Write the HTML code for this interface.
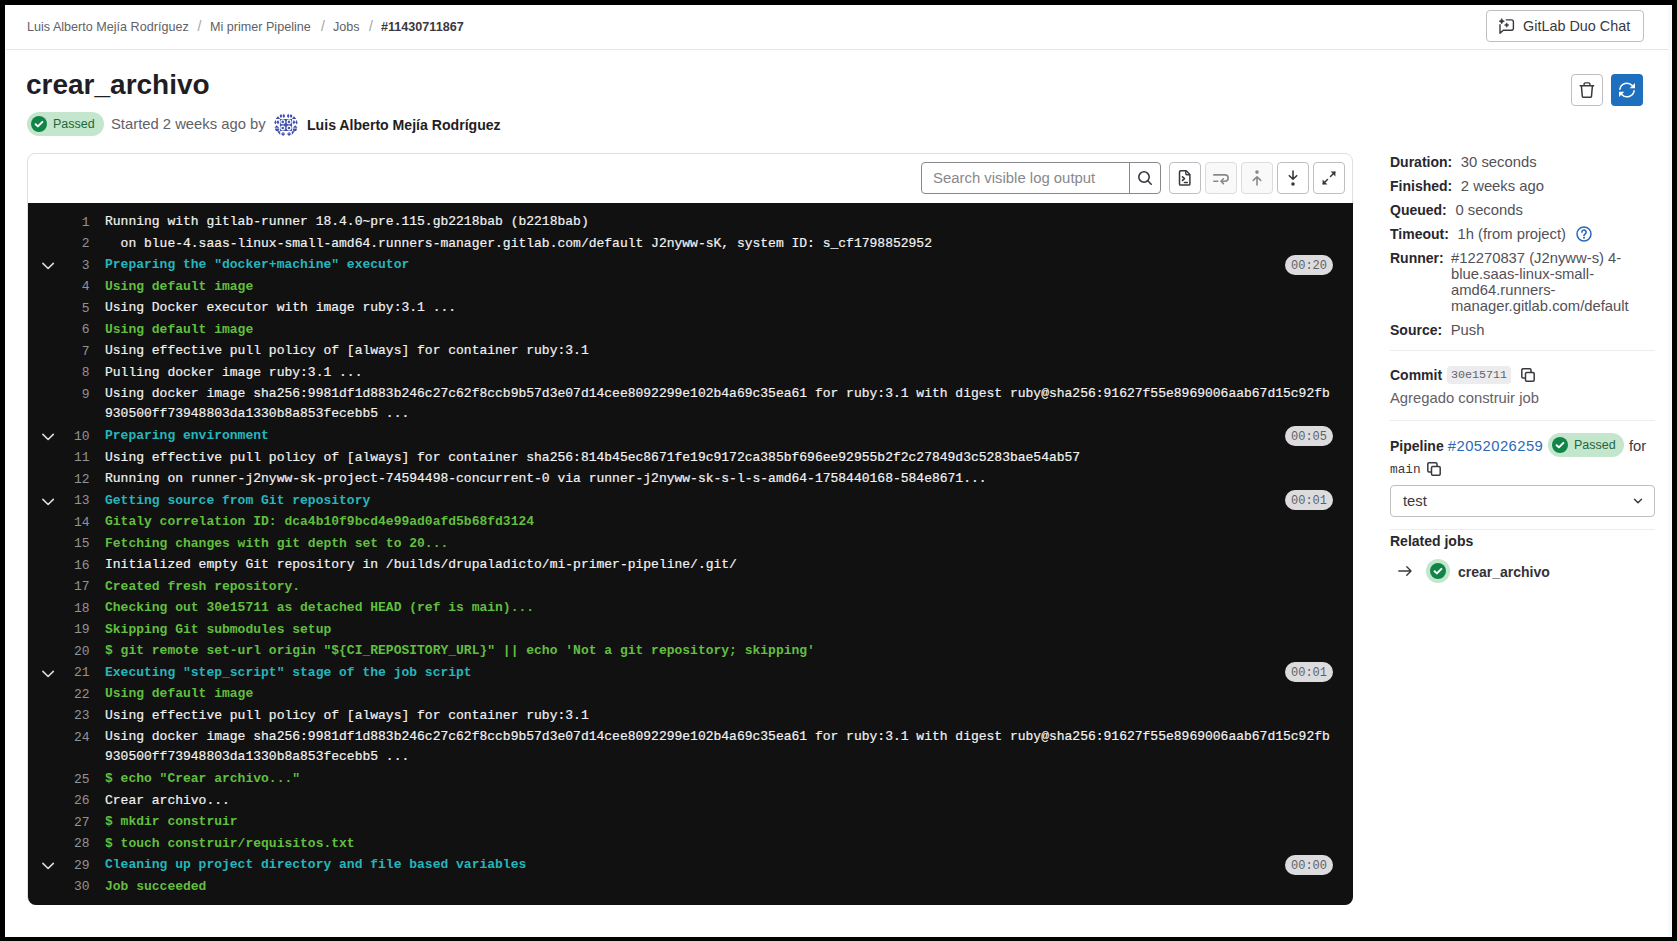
<!DOCTYPE html>
<html><head><meta charset="utf-8">
<style>
html,body{margin:0;padding:0}
body{width:1677px;height:941px;background:#000;position:relative;overflow:hidden;font-family:"Liberation Sans",sans-serif;color:#3a383f}
.abs{position:absolute}
#page{position:absolute;left:5px;top:5px;width:1667px;height:932px;background:#fff}
#sb{position:absolute;left:1668px;top:5px;width:4px;height:932px;background:#fafafa}
#bchr{position:absolute;left:6px;top:49px;width:1662px;height:1px;background:#e6e6e8}
.bc{position:absolute;top:19px;font-size:12.6px;line-height:16px;color:#626168;white-space:nowrap}
.bc b{color:#3a383f}
.bc.sl{font-size:14px;top:18px;color:#a4a3a8}
.btn{position:absolute;box-sizing:border-box;border:1px solid #bfbfc3;border-radius:4px;background:#fff}
.title{position:absolute;left:26px;top:68px;font-size:28px;line-height:34px;font-weight:700;color:#1f1e24;white-space:nowrap}
.badge-ok{position:absolute;box-sizing:border-box;height:24px;border-radius:12px;background:#c3e6cd;color:#24663b;font-size:12.5px;line-height:24px;white-space:nowrap}
.meta{position:absolute;font-size:14.8px;line-height:20px;color:#626168;white-space:nowrap}
#logbox{position:absolute;left:27px;top:153px;width:1326px;height:752px;box-sizing:border-box;border:1px solid #dfdfe1;border-radius:8px;background:#fff}
#log{position:absolute;left:28px;top:203px;width:1325px;height:702px;background:#111;border-radius:0 0 8px 8px;overflow:hidden}
.ll{position:absolute;left:0;width:1325px;height:21.5px;font-family:"Liberation Mono",monospace;font-size:13px}
.ln{position:absolute;left:11px;width:50.5px;top:2px;text-align:right;line-height:19.5px;color:#939298}
.txt{position:absolute;left:77px;top:1.5px;line-height:19.5px;white-space:pre}
.tw{color:#f2f2f2;-webkit-text-stroke:0.2px #f2f2f2}
.tg{color:#62bf3f;font-weight:700}
.tc{color:#25b6bd;font-weight:700}
.chev{position:absolute;left:11.6px;top:2.5px}
.badge{position:absolute;left:1257px;top:0.75px;width:48px;height:20px;border-radius:10px;background:#dcdcde;color:#626168;font-size:12px;line-height:22px;text-align:center}
.side{position:absolute;left:1390px;font-size:14.8px;line-height:16px;color:#3a383f;white-space:nowrap}
.side b{font-size:14px;color:#28272d;margin-right:4.5px}
.side .v{color:#535158}
.hr{position:absolute;left:1390px;width:265px;height:1px;background:#ececef}
</style></head><body>
<div id="page"></div>
<div id="sb"></div>

<!-- breadcrumb -->
<div class="bc" style="left:27px">Luis Alberto Mejía Rodríguez</div>
<div class="bc sl" style="left:197.5px">/</div>
<div class="bc" style="left:210px">Mi primer Pipeline</div>
<div class="bc sl" style="left:321px">/</div>
<div class="bc" style="left:333px">Jobs</div>
<div class="bc sl" style="left:369px">/</div>
<div class="bc" style="left:381px"><b>#11430711867</b></div>
<div id="bchr"></div>

<!-- duo chat -->
<div class="btn" style="left:1486px;top:10px;width:158px;height:32px"></div>
<svg class="abs" style="left:1498.5px;top:18px" width="16" height="16" viewBox="0 0 16 16">
 <path d="M7.3 1.9 H12.4 A2 2 0 0 1 14.4 3.9 V10.2 A2 2 0 0 1 12.4 12.2 H4.3 L1 15.3 V6.6" fill="none" stroke="#3a383f" stroke-width="1.4" stroke-linejoin="round" stroke-linecap="round"/>
 <path d="M2.7 0.4 Q3.2 2.7 5.5 3.2 Q3.2 3.7 2.7 6 Q2.2 3.7 -0.1 3.2 Q2.2 2.7 2.7 0.4Z" fill="#3a383f" stroke="#3a383f" stroke-width="0.5" stroke-linejoin="round"/>
 <path d="M7.7 4.8 Q8.1 6.7 10 7.1 Q8.1 7.5 7.7 9.4 Q7.3 7.5 5.4 7.1 Q7.3 6.7 7.7 4.8Z" fill="#3a383f" stroke="#3a383f" stroke-width="0.5" stroke-linejoin="round"/>
</svg>
<div class="abs" style="left:1523px;top:16px;font-size:14.4px;line-height:20px;color:#3a383f;white-space:nowrap">GitLab Duo Chat</div>

<!-- title -->
<div class="title">crear_archivo</div>
<div class="btn" style="left:1571px;top:74px;width:32px;height:32px"></div>
<svg class="abs" style="left:1579px;top:82px" width="16" height="16" viewBox="0 0 16 16">
 <path d="M1.2 3.7 H14.6" stroke="#3a383f" stroke-width="1.5" stroke-linecap="round"/>
 <path d="M5.1 3.6 V1.8 A1 1 0 0 1 6.1 0.9 H9.9 A1 1 0 0 1 10.9 1.8 V3.6" fill="none" stroke="#3a383f" stroke-width="1.4"/>
 <path d="M2.4 3.9 L3.3 14.3 A1.2 1.2 0 0 0 4.5 15.3 H11.3 A1.2 1.2 0 0 0 12.5 14.3 L13.4 3.9" fill="none" stroke="#3a383f" stroke-width="1.5" stroke-linejoin="round"/>
</svg>
<div class="abs" style="left:1611px;top:74px;width:32px;height:32px;border-radius:4px;background:#1f6fbf"></div>
<svg class="abs" style="left:1619px;top:82px" width="16" height="16" viewBox="0 0 16 16">
 <path d="M0.9 7.2 A7.1 7.1 0 0 1 13.2 3.6" fill="none" stroke="#fff" stroke-width="1.5" stroke-linecap="round"/>
 <path d="M16 0.9 V6.2 H10.7 Z" fill="#fff"/>
 <path d="M15.1 8.8 A7.1 7.1 0 0 1 2.8 12.4" fill="none" stroke="#fff" stroke-width="1.5" stroke-linecap="round"/>
 <path d="M0 15.1 V9.8 H5.3 Z" fill="#fff"/>
</svg>

<!-- status row -->
<div class="badge-ok" style="left:27px;top:112px;width:77px"></div>
<svg class="abs" style="left:31px;top:116px" width="16" height="16" viewBox="0 0 16 16"><circle cx="8" cy="8" r="8" fill="#108548"/><path d="M4.6 8.2 L6.9 10.4 L11.4 5.9" fill="none" stroke="#fff" stroke-width="2" stroke-linecap="round" stroke-linejoin="round"/></svg>
<div class="abs" style="left:53px;top:116px;font-size:12.5px;line-height:16px;color:#24663b">Passed</div>
<div class="meta" style="left:111px;top:114px">Started 2 weeks ago by</div>
<svg class="abs" style="left:274px;top:113px" width="24" height="24" viewBox="0 0 24 24">
<defs><clipPath id="avc"><circle cx="12" cy="12" r="12"/></clipPath></defs>
<g clip-path="url(#avc)"><rect x="6.2" y="6.2" width="11.6" height="11.6" fill="#3f4fae" opacity="0.85"/><path d="M6.9 0.60 L8.20 2.9 L6.9 5.20 L5.60 2.9Z M9.8 0.60 L11.10 2.9 L9.8 5.20 L8.50 2.9Z M14.2 0.60 L15.50 2.9 L14.2 5.20 L12.90 2.9Z M17.1 0.60 L18.40 2.9 L17.1 5.20 L15.80 2.9Z M3.9 3.1 L1.6 5.9 L6.1 5.9Z M20.1 3.1 L17.9 5.9 L22.3 5.9Z M1.35 7.00 L2.65 9.2 L1.35 11.40 L0.05 9.2Z M4.0 7.00 L5.30 9.2 L4.0 11.40 L2.70 9.2Z M19.9 7.00 L21.20 9.2 L19.9 11.40 L18.60 9.2Z M22.6 7.00 L23.90 9.2 L22.6 11.40 L21.30 9.2Z M5.9 5.9 L8.1 5.9 L5.9 8.1Z M18.1 5.9 L15.9 5.9 L18.1 8.1Z M10 5.9 L13.9 5.9 L11.95 7.9Z M5.9 10 L5.9 13.8 L8.2 11.9Z M18.1 10 L18.1 13.8 L15.8 11.9Z M11.95 9.95 L13.95 11.95 L11.95 13.95 L9.95 11.95Z M2.75 12.3 L0.3 14.8 L5.2 14.8Z M21.25 12.3 L18.8 14.8 L23.7 14.8Z M0.9 15.5 L5.4 15.5 L4.6 18.1 L1.7 18.1Z M18.6 15.5 L23.1 15.5 L22.3 18.1 L19.4 18.1Z M11.95 15.8 L10 17.9 L13.9 17.9Z M5.9 17.9 L8.1 17.9 L5.9 15.8Z M18.1 17.9 L15.9 17.9 L18.1 15.8Z M3.1 18.3 L6.2 18.3 L6.2 21.9Z M20.9 18.3 L17.8 18.3 L17.8 21.9Z M7 20.8 Q9.1 17.6 11.2 20.8Z M13 20.8 Q15.1 17.6 17.2 20.8Z M7.2 21.1 L11 21.1 Q9.1 24.2 7.2 21.1Z M13.2 21.1 L17 21.1 Q15.1 24.2 13.2 21.1Z " fill="#3f4fae"/><circle cx="8.75" cy="8.9" r="1.9" fill="none" stroke="#fff" stroke-width="1.1"/><circle cx="8.75" cy="8.9" r="0.8" fill="#3f4fae"/><circle cx="15.0" cy="8.9" r="1.9" fill="none" stroke="#fff" stroke-width="1.1"/><circle cx="15.0" cy="8.9" r="0.8" fill="#3f4fae"/><circle cx="8.75" cy="15.0" r="1.9" fill="none" stroke="#fff" stroke-width="1.1"/><circle cx="8.75" cy="15.0" r="0.8" fill="#3f4fae"/><circle cx="15.0" cy="15.0" r="1.9" fill="none" stroke="#fff" stroke-width="1.1"/><circle cx="15.0" cy="15.0" r="0.8" fill="#3f4fae"/></g></svg>
<div class="abs" style="left:307px;top:116px;font-size:14.1px;line-height:18px;font-weight:700;color:#1f1e24;white-space:nowrap">Luis Alberto Mejía Rodríguez</div>

<!-- log box -->
<div id="logbox"></div>
<div class="abs" style="left:921px;top:162px;width:240px;height:32px;box-sizing:border-box;border:1px solid #89888d;border-radius:4px;background:#fff"></div>
<div class="abs" style="left:1129px;top:163px;width:1px;height:30px;background:#89888d"></div>
<div class="abs" style="left:933px;top:168px;font-size:14.9px;line-height:20px;color:#89888d;white-space:nowrap">Search visible log output</div>
<svg class="abs" style="left:1137px;top:170px" width="16" height="16" viewBox="0 0 16 16"><circle cx="7" cy="7" r="5.2" fill="none" stroke="#3a383f" stroke-width="1.6"/><path d="M10.8 10.8 L14.2 14.2" stroke="#3a383f" stroke-width="1.6" stroke-linecap="round"/></svg>

<div class="btn" style="left:1169px;top:162px;width:32px;height:32px"></div>
<svg class="abs" style="left:1177px;top:170px" width="16" height="16" viewBox="0 0 16 16">
 <path d="M2.5 2 A1.2 1.2 0 0 1 3.7 0.8 H9.2 L12.9 4.5 V13.9 A1.2 1.2 0 0 1 11.7 15.1 H3.7 A1.2 1.2 0 0 1 2.5 13.9 Z" fill="none" stroke="#3a383f" stroke-width="1.5" stroke-linejoin="round"/>
 <path d="M8.8 0.9 V3.7 A1 1 0 0 0 9.8 4.7 H12.8" fill="none" stroke="#3a383f" stroke-width="1.4"/>
 <path d="M5.5 6.8 L7.5 8.6 L5.5 10.4" fill="none" stroke="#3a383f" stroke-width="1.6" stroke-linecap="round" stroke-linejoin="round"/>
 <path d="M7.5 12.4 H10.3" stroke="#3a383f" stroke-width="1.5" stroke-linecap="round"/>
</svg>
<div class="btn" style="left:1205px;top:162px;width:32px;height:32px;background:#faf9fa;border-color:#dcdcde"></div>
<svg class="abs" style="left:1213px;top:170px" width="16" height="16" viewBox="0 0 16 16">
 <path d="M0.8 4.9 H12 A3.15 3.15 0 0 1 12 11.2 H8.4" fill="none" stroke="#89888d" stroke-width="1.6" stroke-linecap="round"/>
 <path d="M10.4 8.8 L8 11.2 L10.4 13.6" fill="none" stroke="#89888d" stroke-width="1.6" stroke-linecap="round" stroke-linejoin="round"/>
 <path d="M0.8 11.2 H4.8" stroke="#89888d" stroke-width="1.6" stroke-linecap="round"/>
</svg>
<div class="btn" style="left:1241px;top:162px;width:32px;height:32px;background:#faf9fa;border-color:#dcdcde"></div>
<svg class="abs" style="left:1249px;top:170px" width="16" height="16" viewBox="0 0 16 16">
 <circle cx="8" cy="2.1" r="1.8" fill="#89888d"/>
 <path d="M8 15 V7.6 M4.3 10.4 L8 6.8 L11.7 10.4" fill="none" stroke="#89888d" stroke-width="1.6" stroke-linecap="round" stroke-linejoin="round"/>
</svg>
<div class="btn" style="left:1277px;top:162px;width:32px;height:32px"></div>
<svg class="abs" style="left:1285px;top:170px" width="16" height="16" viewBox="0 0 16 16">
 <circle cx="8" cy="14" r="1.8" fill="#3a383f"/>
 <path d="M8 1 V8.6 M4.3 5.7 L8 9.3 L11.7 5.7" fill="none" stroke="#3a383f" stroke-width="1.6" stroke-linecap="round" stroke-linejoin="round"/>
</svg>
<div class="btn" style="left:1313px;top:162px;width:32px;height:32px"></div>
<svg class="abs" style="left:1321px;top:170px" width="16" height="16" viewBox="0 0 16 16">
 <path d="M9.5 6.5 L13.8 2.2 M2.2 13.8 L6.5 9.5" stroke="#3a383f" stroke-width="1.5" stroke-linecap="round"/>
 <path d="M9.6 1.6 H14.4 V6.4 Z M1.6 9.6 V14.4 H6.4 Z" fill="#3a383f"/>
</svg>

<div id="log">
<div class="ll" style="top:7.85px"><span class="ln">1</span><span class="txt tw">Running with gitlab-runner 18.4.0~pre.115.gb2218bab (b2218bab)</span></div>
<div class="ll" style="top:29.35px"><span class="ln">2</span><span class="txt tw">  on blue-4.saas-linux-small-amd64.runners-manager.gitlab.com/default J2nyww-sK, system ID: s_cf1798852952</span></div>
<div class="ll" style="top:50.85px"><span class="ln">3</span><svg class="chev" width="16" height="16" viewBox="0 0 16 16"><path d="M2.9 7.4 L8.1 12.5 L13.3 7.4" fill="none" stroke="#dcdcde" stroke-width="1.6" stroke-linecap="round" stroke-linejoin="round"/></svg><span class="badge">00:20</span><span class="txt tc">Preparing the "docker+machine" executor</span></div>
<div class="ll" style="top:72.35px"><span class="ln">4</span><span class="txt tg">Using default image</span></div>
<div class="ll" style="top:93.85px"><span class="ln">5</span><span class="txt tw">Using Docker executor with image ruby:3.1 ...</span></div>
<div class="ll" style="top:115.35px"><span class="ln">6</span><span class="txt tg">Using default image</span></div>
<div class="ll" style="top:136.85px"><span class="ln">7</span><span class="txt tw">Using effective pull policy of [always] for container ruby:3.1</span></div>
<div class="ll" style="top:158.35px"><span class="ln">8</span><span class="txt tw">Pulling docker image ruby:3.1 ...</span></div>
<div class="ll" style="top:179.85px"><span class="ln">9</span><span class="txt tw">Using docker image sha256:9981df1d883b246c27c62f8ccb9b57d3e07d14cee8092299e102b4a69c35ea61 for ruby:3.1 with digest ruby@sha256:91627f55e8969006aab67d15c92fb<br>930500ff73948803da1330b8a853fecebb5 ...</span></div>
<div class="ll" style="top:221.85px"><span class="ln">10</span><svg class="chev" width="16" height="16" viewBox="0 0 16 16"><path d="M2.9 7.4 L8.1 12.5 L13.3 7.4" fill="none" stroke="#dcdcde" stroke-width="1.6" stroke-linecap="round" stroke-linejoin="round"/></svg><span class="badge">00:05</span><span class="txt tc">Preparing environment</span></div>
<div class="ll" style="top:243.35px"><span class="ln">11</span><span class="txt tw">Using effective pull policy of [always] for container sha256:814b45ec8671fe19c9172ca385bf696ee92955b2f2c27849d3c5283bae54ab57</span></div>
<div class="ll" style="top:264.85px"><span class="ln">12</span><span class="txt tw">Running on runner-j2nyww-sk-project-74594498-concurrent-0 via runner-j2nyww-sk-s-l-s-amd64-1758440168-584e8671...</span></div>
<div class="ll" style="top:286.35px"><span class="ln">13</span><svg class="chev" width="16" height="16" viewBox="0 0 16 16"><path d="M2.9 7.4 L8.1 12.5 L13.3 7.4" fill="none" stroke="#dcdcde" stroke-width="1.6" stroke-linecap="round" stroke-linejoin="round"/></svg><span class="badge">00:01</span><span class="txt tc">Getting source from Git repository</span></div>
<div class="ll" style="top:307.85px"><span class="ln">14</span><span class="txt tg">Gitaly correlation ID: dca4b10f9bcd4e99ad0afd5b68fd3124</span></div>
<div class="ll" style="top:329.35px"><span class="ln">15</span><span class="txt tg">Fetching changes with git depth set to 20...</span></div>
<div class="ll" style="top:350.85px"><span class="ln">16</span><span class="txt tw">Initialized empty Git repository in /builds/drupaladicto/mi-primer-pipeline/.git/</span></div>
<div class="ll" style="top:372.35px"><span class="ln">17</span><span class="txt tg">Created fresh repository.</span></div>
<div class="ll" style="top:393.85px"><span class="ln">18</span><span class="txt tg">Checking out 30e15711 as detached HEAD (ref is main)...</span></div>
<div class="ll" style="top:415.35px"><span class="ln">19</span><span class="txt tg">Skipping Git submodules setup</span></div>
<div class="ll" style="top:436.85px"><span class="ln">20</span><span class="txt tg">$ git remote set-url origin "${CI_REPOSITORY_URL}" || echo 'Not a git repository; skipping'</span></div>
<div class="ll" style="top:458.35px"><span class="ln">21</span><svg class="chev" width="16" height="16" viewBox="0 0 16 16"><path d="M2.9 7.4 L8.1 12.5 L13.3 7.4" fill="none" stroke="#dcdcde" stroke-width="1.6" stroke-linecap="round" stroke-linejoin="round"/></svg><span class="badge">00:01</span><span class="txt tc">Executing "step_script" stage of the job script</span></div>
<div class="ll" style="top:479.85px"><span class="ln">22</span><span class="txt tg">Using default image</span></div>
<div class="ll" style="top:501.35px"><span class="ln">23</span><span class="txt tw">Using effective pull policy of [always] for container ruby:3.1</span></div>
<div class="ll" style="top:522.85px"><span class="ln">24</span><span class="txt tw">Using docker image sha256:9981df1d883b246c27c62f8ccb9b57d3e07d14cee8092299e102b4a69c35ea61 for ruby:3.1 with digest ruby@sha256:91627f55e8969006aab67d15c92fb<br>930500ff73948803da1330b8a853fecebb5 ...</span></div>
<div class="ll" style="top:564.85px"><span class="ln">25</span><span class="txt tg">$ echo "Crear archivo..."</span></div>
<div class="ll" style="top:586.35px"><span class="ln">26</span><span class="txt tw">Crear archivo...</span></div>
<div class="ll" style="top:607.85px"><span class="ln">27</span><span class="txt tg">$ mkdir construir</span></div>
<div class="ll" style="top:629.35px"><span class="ln">28</span><span class="txt tg">$ touch construir/requisitos.txt</span></div>
<div class="ll" style="top:650.85px"><span class="ln">29</span><svg class="chev" width="16" height="16" viewBox="0 0 16 16"><path d="M2.9 7.4 L8.1 12.5 L13.3 7.4" fill="none" stroke="#dcdcde" stroke-width="1.6" stroke-linecap="round" stroke-linejoin="round"/></svg><span class="badge">00:00</span><span class="txt tc">Cleaning up project directory and file based variables</span></div>
<div class="ll" style="top:672.35px"><span class="ln">30</span><span class="txt tg">Job succeeded</span></div>
</div>

<!-- sidebar -->
<div class="side" style="top:154px"><b>Duration:</b> <span class="v">30 seconds</span></div>
<div class="side" style="top:178px"><b>Finished:</b> <span class="v">2 weeks ago</span></div>
<div class="side" style="top:202px"><b>Queued:</b> <span class="v">0 seconds</span></div>
<div class="side" style="top:226px"><b>Timeout:</b> <span class="v">1h (from project)</span></div>
<svg class="abs" style="left:1576px;top:226px" width="16" height="16" viewBox="0 0 16 16"><circle cx="8" cy="8" r="7" fill="none" stroke="#2a69b8" stroke-width="1.5"/><path d="M5.9 6.2 A2.1 2.1 0 1 1 9.3 7.8 L8 9.2 V9.6" fill="none" stroke="#2a69b8" stroke-width="1.6" stroke-linecap="round" stroke-linejoin="round"/><circle cx="8" cy="11.8" r="1" fill="#2a69b8"/></svg>
<div class="side" style="top:250px"><b>Runner:</b></div>
<div class="side" style="top:250px;left:1451px;line-height:16px;color:#535158">#12270837 (J2nyww-s) 4-<br>blue.saas-linux-small-<br>amd64.runners-<br>manager.gitlab.com/default</div>
<div class="side" style="top:322px"><b>Source:</b> <span class="v">Push</span></div>
<div class="hr" style="top:350px"></div>
<div class="side" style="top:367px"><b style="margin-right:0">Commit</b></div>
<div class="abs" style="left:1447px;top:366px;width:64px;height:18px;border-radius:4px;background:#ececef"></div>
<div class="abs" style="left:1451px;top:367px;font-family:'Liberation Mono',monospace;font-size:11.7px;line-height:16px;color:#626168">30e15711</div>
<svg class="abs" style="left:1520px;top:367px" width="16" height="16" viewBox="0 0 16 16" class="copy"><path d="M5.5 11 H3 A1.2 1.2 0 0 1 1.8 9.8 V3 A1.2 1.2 0 0 1 3 1.8 H9.8 A1.2 1.2 0 0 1 11 3 V5.5" fill="none" stroke="#3a383f" stroke-width="1.5"/><rect x="5.5" y="5.5" width="8.7" height="8.7" rx="1.2" fill="none" stroke="#3a383f" stroke-width="1.5"/></svg>
<div class="side" style="top:390px;color:#626168">Agregado construir job</div>
<div class="hr" style="top:420px"></div>
<div class="side" style="top:438px"><b style="margin-right:0">Pipeline</b> <span style="color:#2a69b8;letter-spacing:0.45px">#2052026259</span></div>
<div class="badge-ok" style="left:1548px;top:433px;width:76px"></div>
<svg class="abs" style="left:1552px;top:437px" width="16" height="16" viewBox="0 0 16 16"><circle cx="8" cy="8" r="8" fill="#108548"/><path d="M4.6 8.2 L6.9 10.4 L11.4 5.9" fill="none" stroke="#fff" stroke-width="2" stroke-linecap="round" stroke-linejoin="round"/></svg>
<div class="abs" style="left:1574px;top:437px;font-size:12.5px;line-height:16px;color:#24663b">Passed</div>
<div class="side" style="top:438px;left:1629px">for</div>
<div class="abs" style="left:1390px;top:462px;font-family:'Liberation Mono',monospace;font-size:12.8px;line-height:16px;color:#3a383f">main</div>
<svg class="abs" style="left:1426px;top:461px" width="16" height="16" viewBox="0 0 16 16"><path d="M5.5 11 H3 A1.2 1.2 0 0 1 1.8 9.8 V3 A1.2 1.2 0 0 1 3 1.8 H9.8 A1.2 1.2 0 0 1 11 3 V5.5" fill="none" stroke="#3a383f" stroke-width="1.5"/><rect x="5.5" y="5.5" width="8.7" height="8.7" rx="1.2" fill="none" stroke="#3a383f" stroke-width="1.5"/></svg>
<div class="abs" style="left:1390px;top:485px;width:265px;height:32px;box-sizing:border-box;border:1px solid #bfbfc3;border-radius:4px;background:#fff"></div>
<div class="side" style="top:493px;left:1403px">test</div>
<svg class="abs" style="left:1630px;top:493px" width="16" height="16" viewBox="0 0 16 16"><path d="M4.5 6.3 L8 9.8 L11.5 6.3" fill="none" stroke="#3a383f" stroke-width="1.5" stroke-linecap="round" stroke-linejoin="round"/></svg>
<div class="hr" style="top:529px"></div>
<div class="side" style="top:533px"><b style="margin-right:0">Related jobs</b></div>
<svg class="abs" style="left:1397px;top:563px" width="16" height="16" viewBox="0 0 16 16"><path d="M1.8 8 H14 M9.8 3.8 L14 8 L9.8 12.2" fill="none" stroke="#3a383f" stroke-width="1.4" stroke-linecap="round" stroke-linejoin="round"/></svg>
<svg class="abs" style="left:1426px;top:559px" width="24" height="24" viewBox="0 0 24 24"><circle cx="12" cy="12" r="12" fill="#c3e6cd"/><circle cx="12" cy="12" r="8" fill="#108548"/><path d="M8.6 12.2 L10.9 14.4 L15.4 9.9" fill="none" stroke="#fff" stroke-width="2" stroke-linecap="round" stroke-linejoin="round"/></svg>
<div class="side" style="top:564px;left:1458px"><b style="margin-right:0;color:#333238">crear_archivo</b></div>
</body></html>
